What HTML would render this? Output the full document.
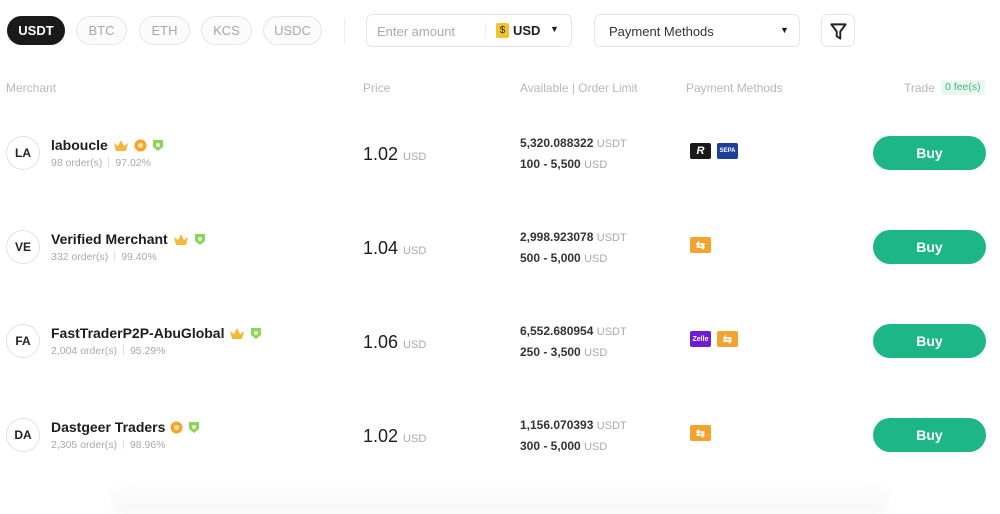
<!DOCTYPE html>
<html><head><meta charset="utf-8"><style>
*{margin:0;padding:0;box-sizing:border-box}
body{width:1000px;height:500px;background:#fff;font-family:"Liberation Sans",sans-serif;position:relative;overflow:hidden;color:#1d1d1d}
.a{position:absolute}
.pill{position:absolute;top:16px;height:29px;border:1px solid #e6e6e6;border-radius:15px;background:#fbfbfb;color:#a8a8a8;font-size:13px;display:flex;align-items:center;justify-content:center}
.box{position:absolute;top:14px;height:33px;border:1px solid #e6e6e6;border-radius:6px;background:#fff}
.hd{position:absolute;top:81px;font-size:12px;color:#b8b8b8}
.av{position:absolute;left:6px;width:34px;height:34px;border:1px solid #e2e2e2;border-radius:50%;font-size:12px;font-weight:bold;display:flex;align-items:center;justify-content:center;color:#222}
.nm{position:absolute;left:51px;font-size:14px;font-weight:bold;color:#1d1d1d;display:flex;align-items:center;gap:5px;white-space:nowrap}
.sub{position:absolute;left:51px;font-size:10.5px;color:#aaa}
.sub i{display:inline-block;width:1px;height:10px;background:#e0e0e0;margin:0 6px;vertical-align:-1px}
.pr{position:absolute;left:363px;font-size:18px;font-weight:500;color:#1d1d1d}
.pr span,.av2 span{font-size:11px;color:#aaa;font-weight:normal}
.av2{position:absolute;left:520px;font-size:12px;font-weight:bold;color:#333}
.buy{position:absolute;left:873px;width:113px;height:34px;border-radius:17px;background:#1db787;color:#fff;font-weight:bold;font-size:14px;display:flex;align-items:center;justify-content:center}
.pm{position:absolute;width:21px;height:16px;border-radius:2px;display:flex;align-items:center;justify-content:center;font-size:7px;font-weight:bold;color:#fff}
.or{background:#f4a330}
</style></head><body>
<div class="pill" style="left:7px;width:58px;background:#1a1a1a;color:#fff;font-weight:bold;border-color:#1a1a1a">USDT</div>
<div class="pill" style="left:76px;width:51px">BTC</div>
<div class="pill" style="left:139px;width:51px">ETH</div>
<div class="pill" style="left:201px;width:51px">KCS</div>
<div class="pill" style="left:263px;width:59px">USDC</div>
<div class="a" style="left:344px;top:18px;width:1px;height:26px;background:#eee"></div>
<div class="box" style="left:366px;width:206px"><span class="a" style="left:10px;top:9px;font-size:13px;color:#aaa">Enter amount</span><span class="a" style="left:118px;top:8px;width:1px;height:16px;background:#eee"></span><span class="a" style="left:129px;top:8px;width:13px;height:15px;background:#f2c230;border-radius:2px;font-size:10px;text-align:center;line-height:15px;color:#333">$</span><span class="a" style="left:146px;top:8px;font-size:13px;font-weight:bold">USD</span><span class="a" style="left:183px;top:9px;font-size:9px">▼</span></div>
<div class="box" style="left:594px;width:206px"><span class="a" style="left:14px;top:9px;font-size:13px;color:#333">Payment Methods</span><span class="a" style="left:185px;top:10px;font-size:9px">▼</span></div>
<div class="box" style="left:821px;width:34px"><svg class="a" style="left:7px;top:7px" width="19" height="19" viewBox="0 0 16 16"><path d="M2 2h12l-4.5 6v6l-3-2V8z" fill="none" stroke="#222" stroke-width="1.6" stroke-linejoin="round"/></svg></div>

<div class="hd" style="left:6px">Merchant</div>
<div class="hd" style="left:363px">Price</div>
<div class="hd" style="left:520px">Available | Order Limit</div>
<div class="hd" style="left:686px">Payment Methods</div>
<div class="hd" style="left:904px">Trade</div>
<div class="a" style="left:941px;top:80px;height:15px;padding:0 4px;background:#eaf8f1;color:#3fb883;font-size:10.5px;line-height:15px;border-radius:2px">0 fee(s)</div>

<div class="av" style="top:136px">LA</div>
<div class="nm" style="top:137px">laboucle <svg width="16" height="12"><path d="M1 4l4 3 3-6 3 6 4-3-2 8H3z" fill="#f4b93a"/></svg><svg width="13" height="13"><circle cx="6.5" cy="6.5" r="6" fill="#f4a62a"/><circle cx="6.5" cy="6.5" r="2.5" fill="#fde6a8"/></svg><svg width="12" height="13"><path d="M1 1h10v7l-5 4-5-4z" fill="#8fd45a"/><circle cx="6" cy="6" r="2" fill="#e8f8da"/></svg></div>
<div class="sub" style="top:157px">98 order(s)<i></i>97.02%</div>
<div class="pr" style="top:144px">1.02 <span>USD</span></div>
<div class="av2" style="top:136px">5,320.088322 <span>USDT</span></div>
<div class="av2" style="top:157px">100 - 5,500 <span>USD</span></div>
<div class="pm" style="left:690px;top:143px;background:#1a1a1a;font-size:11px;font-style:italic">R</div>
<div class="pm" style="left:717px;top:143px;background:#1d3f9a;font-size:6px">SEPA</div>
<div class="buy" style="top:136px">Buy</div>

<div class="av" style="top:230px">VE</div>
<div class="nm" style="top:231px">Verified Merchant <svg width="16" height="12"><path d="M1 4l4 3 3-6 3 6 4-3-2 8H3z" fill="#f4b93a"/></svg><svg width="12" height="13"><path d="M1 1h10v7l-5 4-5-4z" fill="#8fd45a"/><circle cx="6" cy="6" r="2" fill="#e8f8da"/></svg></div>
<div class="sub" style="top:251px">332 order(s)<i></i>99.40%</div>
<div class="pr" style="top:238px">1.04 <span>USD</span></div>
<div class="av2" style="top:230px">2,998.923078 <span>USDT</span></div>
<div class="av2" style="top:251px">500 - 5,000 <span>USD</span></div>
<div class="pm or" style="left:690px;top:237px;font-size:11px">⇆</div>
<div class="buy" style="top:230px">Buy</div>

<div class="av" style="top:324px">FA</div>
<div class="nm" style="top:325px">FastTraderP2P-AbuGlobal <svg width="16" height="12"><path d="M1 4l4 3 3-6 3 6 4-3-2 8H3z" fill="#f4b93a"/></svg><svg width="12" height="13"><path d="M1 1h10v7l-5 4-5-4z" fill="#8fd45a"/><circle cx="6" cy="6" r="2" fill="#e8f8da"/></svg></div>
<div class="sub" style="top:345px">2,004 order(s)<i></i>95.29%</div>
<div class="pr" style="top:332px">1.06 <span>USD</span></div>
<div class="av2" style="top:324px">6,552.680954 <span>USDT</span></div>
<div class="av2" style="top:345px">250 - 3,500 <span>USD</span></div>
<div class="pm" style="left:690px;top:331px;background:#6d1ed4">Zelle</div>
<div class="pm or" style="left:717px;top:331px;font-size:11px">⇆</div>
<div class="buy" style="top:324px">Buy</div>

<div class="av" style="top:418px">DA</div>
<div class="nm" style="top:419px">Dastgeer Traders <svg width="13" height="13"><circle cx="6.5" cy="6.5" r="6" fill="#f4a62a"/><circle cx="6.5" cy="6.5" r="2.5" fill="#fde6a8"/></svg><svg width="12" height="13"><path d="M1 1h10v7l-5 4-5-4z" fill="#8fd45a"/><circle cx="6" cy="6" r="2" fill="#e8f8da"/></svg></div>
<div class="sub" style="top:439px">2,305 order(s)<i></i>98.96%</div>
<div class="pr" style="top:426px">1.02 <span>USD</span></div>
<div class="av2" style="top:418px">1,156.070393 <span>USDT</span></div>
<div class="av2" style="top:439px">300 - 5,000 <span>USD</span></div>
<div class="pm or" style="left:690px;top:425px;font-size:11px">⇆</div>
<div class="buy" style="top:418px">Buy</div>

<div class="a" style="left:110px;top:484px;width:780px;height:30px;background:linear-gradient(#fff,#f5f5f5);border-radius:20px;filter:blur(5px)"></div>
</body></html>
